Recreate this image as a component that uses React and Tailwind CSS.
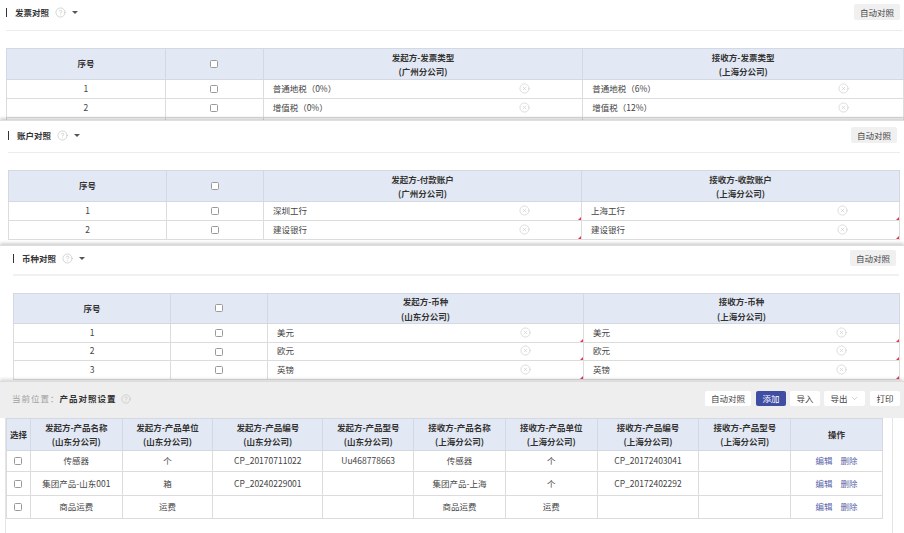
import { ChevronDown, CircleHelp, CircleX } from "lucide-react";

const font = { fontFamily: '"Noto Sans CJK SC", "Noto Sans", sans-serif' };

const sections = [
  {
    title: "发票对照",
    box: "h-[120px] pl-[6px]",
    head: "mr-[2px] border-b border-[#ececec] pt-[4px] pb-[10px]",
    btn: "mr-[2px]",
    cols: ["w-[159px]", "w-[98px]", "w-[320px]", "w-[321px]"],
    pads: ["pr-[52px]", "pr-[54px]"],
    headH: "h-[31px]",
    rowH: "h-[19px]",
    left: ["发起方-发票类型", "(广州分公司)"],
    right: ["接收方-发票类型", "(上海分公司)"],
    rows: [
      ["普通地税（0%）", "普通地税（6%）"],
      ["增值税（0%）", "增值税（12%）"],
      ["", ""],
    ],
    marks: false,
  },
  {
    title: "账户对照",
    box: "h-[125px] border-t border-[#dedede] pl-[8px] shadow-[0_-2px_3px_rgba(0,0,0,0.18)]",
    head: "mr-[4px] border-b border-[#ececec] pt-[6px] pb-[9px]",
    btn: "mr-[3px]",
    cols: ["w-[158px]", "w-[97px]", "w-[318px]", "w-[318px]"],
    pads: ["pr-[51px]", "pr-[51px]"],
    headH: "h-[31px]",
    rowH: "h-[19px]",
    left: ["发起方-付款账户", "(广州分公司)"],
    right: ["接收方-收款账户", "(上海分公司)"],
    rows: [
      ["深圳工行", "上海工行"],
      ["建设银行", "建设银行"],
    ],
    marks: true,
  },
  {
    title: "币种对照",
    box: "h-[136px] border-t border-[#dedede] pl-[13px] shadow-[0_-2px_3px_rgba(0,0,0,0.18)]",
    head: "mr-[5px] border-b-2 border-[#f0f0f0] pt-[4px] pb-[8px]",
    btn: "mr-[3px]",
    cols: ["w-[157px]", "w-[97px]", "w-[316px]", "w-[316px]"],
    pads: ["pr-[52px]", "pr-[52px]"],
    headH: "h-[30px]",
    rowH: "h-[18.5px]",
    left: ["发起方-币种", "(山东分公司)"],
    right: ["接收方-币种", "(上海分公司)"],
    rows: [
      ["美元", "美元"],
      ["欧元", "欧元"],
      ["英镑", "英镑"],
    ],
    marks: true,
  },
];

const products = [
  { h: "h-[21px]", cells: ["传感器", "个", "CP_20170711022", "Uu468778663", "传感器", "个", "CP_20172403041", ""] },
  { h: "h-[24px]", cells: ["集团产品-山东001", "箱", "CP_20240229001", "", "集团产品-上海", "个", "CP_20172402292", ""] },
  { h: "h-[23px]", cells: ["商品运费", "运费", "", "", "商品运费", "运费", "", ""] },
];

const productHead = [
  ["发起方-产品名称", "(山东分公司)", "w-[92px]"],
  ["发起方-产品单位", "(山东分公司)", "w-[91px]"],
  ["发起方-产品编号", "(山东分公司)", "w-[110px]"],
  ["发起方-产品型号", "(山东分公司)", "w-[91px]"],
  ["接收方-产品名称", "(上海分公司)", "w-[92px]"],
  ["接收方-产品单位", "(上海分公司)", "w-[92px]"],
  ["接收方-产品编号", "(上海分公司)", "w-[102px]"],
  ["接收方-产品型号", "(上海分公司)", "w-[92px]"],
];

function Check() {
  return <span className="mb-[1px] inline-block h-[8px] w-[8px] rounded-[1.5px] border border-[#9a9a9a] bg-white align-middle" />;
}

function Cell({ text, mark, pad }) {
  return (
    <td className="relative border border-[#dcdcdc] pl-[9px]">
      <div className={`flex h-full items-center justify-between pb-[1px] ${pad}`}>
        <span>{text}</span>
        <CircleX size={11} strokeWidth={1.4} className="text-[#cccccc]" />
      </div>
      {mark && <span className="absolute bottom-0 right-0 border-b-[3px] border-l-[3px] border-b-[#f0304a] border-l-transparent" />}
    </td>
  );
}

function MappingSection({ s }) {
  return (
    <section className={`relative overflow-hidden bg-white ${s.box}`}>
      <div className={`flex items-center justify-between ${s.head}`}>
        <div className="flex items-center">
          <span className="mr-[8px] h-[9px] w-px bg-[#333]" />
          <span className="text-[8.5px] font-bold text-[#333]">{s.title}</span>
          <CircleHelp size={11} strokeWidth={1.2} className="ml-[6px] text-[#b5b5b5]" />
          <span className="ml-[6px] border-x-[3px] border-t-[3px] border-x-transparent border-t-[#555]" />
        </div>
        <button className={`h-[16px] w-[46px] rounded-[2px] bg-[#f0f0f0] text-[8.5px] text-[#444] ${s.btn}`}>自动对照</button>
      </div>
      <table className="mt-[17px] table-fixed border-collapse text-center text-[8.5px] text-[#444]">
        <colgroup>
          {s.cols.map((c, i) => (
            <col key={i} className={c} />
          ))}
        </colgroup>
        <thead>
          <tr className={`bg-[#e3e9f4] font-bold text-[#333] ${s.headH}`}>
            <th className="border border-[#d3d8e2] pb-[1px]">序号</th>
            <th className="border border-[#d3d8e2] pb-[2px] font-normal">
              <Check />
            </th>
            <th className="border border-[#d3d8e2] leading-[14.5px]">
              {s.left[0]}
              <br />
              {s.left[1]}
            </th>
            <th className="border border-[#d3d8e2] leading-[14.5px]">
              {s.right[0]}
              <br />
              {s.right[1]}
            </th>
          </tr>
        </thead>
        <tbody>
          {s.rows.map((r, i) => (
            <tr key={i} className={s.rowH}>
              <td className="border border-[#dcdcdc] pb-[1px]">{r[0] ? i + 1 : ""}</td>
              <td className="border border-[#dcdcdc] pb-[1px]">{r[0] && <Check />}</td>
              {r[0] ? <Cell text={r[0]} mark={s.marks} pad={s.pads[0]} /> : <td className="border border-[#dcdcdc]" />}
              {r[1] ? <Cell text={r[1]} mark={s.marks} pad={s.pads[1]} /> : <td className="border border-[#dcdcdc]" />}
            </tr>
          ))}
        </tbody>
      </table>
    </section>
  );
}

function ToolButton({ children, className }) {
  return (
    <button className={`flex h-[15.5px] items-center justify-center rounded-[2px] text-[8.5px] ${className}`}>
      {children}
    </button>
  );
}

export default function App() {
  return (
    <div className="flex h-[533px] w-[904px] flex-col overflow-hidden bg-white" style={font}>
      {sections.map((s) => (
        <MappingSection key={s.title} s={s} />
      ))}

      <section className="relative flex-1 bg-white">
        <div className="flex h-[37px] items-center justify-between border-t border-[#dcdcdc] bg-[#eeeeee] pb-[3px] pl-[12px] pr-[4px] shadow-[0_-2px_3px_rgba(0,0,0,0.15)]">
          <div className="flex items-center text-[8.5px]">
            <span className="tracking-[1px] text-[#a0a0a0]">当前位置：</span>
            <span className="font-bold tracking-[1px] text-[#333]">产品对照设置</span>
            <CircleHelp size={10} strokeWidth={1.2} className="ml-[4px] text-[#b5b5b5]" />
          </div>
          <div className="flex items-center gap-[4px]">
            <ToolButton className="w-[46px] bg-white text-[#444]">自动对照</ToolButton>
            <ToolButton className="ml-px w-[30px] bg-[#3f4ea3] text-white">添加</ToolButton>
            <ToolButton className="w-[30px] bg-white text-[#444]">导入</ToolButton>
            <ToolButton className="w-[41px] gap-[2px] bg-white text-[#444]">
              导出
              <ChevronDown size={9} strokeWidth={1.2} className="text-[#999]" />
            </ToolButton>
            <ToolButton className="ml-px w-[30px] bg-white text-[#444]">打印</ToolButton>
          </div>
        </div>
        <div className="ml-[5px] flex h-[115px] w-[888px] border-x border-[#e4e4e4] pr-[9px]">
          <table className="table-fixed border-collapse self-start text-center text-[8.5px] text-[#444]">
            <colgroup>
              <col className="w-[24px]" />
              {productHead.map((h, i) => (
                <col key={i} className={h[2]} />
              ))}
              <col className="w-[92px]" />
            </colgroup>
            <thead>
              <tr className="h-[32px] bg-[#e3e9f4] font-bold text-[#333]">
                <th className="border border-[#d3d8e2] pb-[1px]">选择</th>
                {productHead.map((h) => (
                  <th key={h[0]} className="border border-[#d3d8e2] pb-[2px] leading-[14px]">
                    {h[0]}
                    <br />
                    {h[1]}
                  </th>
                ))}
                <th className="border border-[#d3d8e2] pb-[1px]">操作</th>
              </tr>
            </thead>
            <tbody>
              {products.map((row) => (
                <tr key={row.cells[0]} className={row.h}>
                  <td className="border border-[#dcdcdc] pb-[1px]">
                    <Check />
                  </td>
                  {row.cells.map((c, i) => (
                    <td key={i} className="border border-[#dcdcdc] pb-[1px]">
                      {c}
                    </td>
                  ))}
                  <td className="border border-[#dcdcdc] pb-[1px] text-[#5a64a8]">
                    <span>编辑</span>
                    <span className="ml-[8px]">删除</span>
                  </td>
                </tr>
              ))}
            </tbody>
          </table>
        </div>
      </section>
    </div>
  );
}
